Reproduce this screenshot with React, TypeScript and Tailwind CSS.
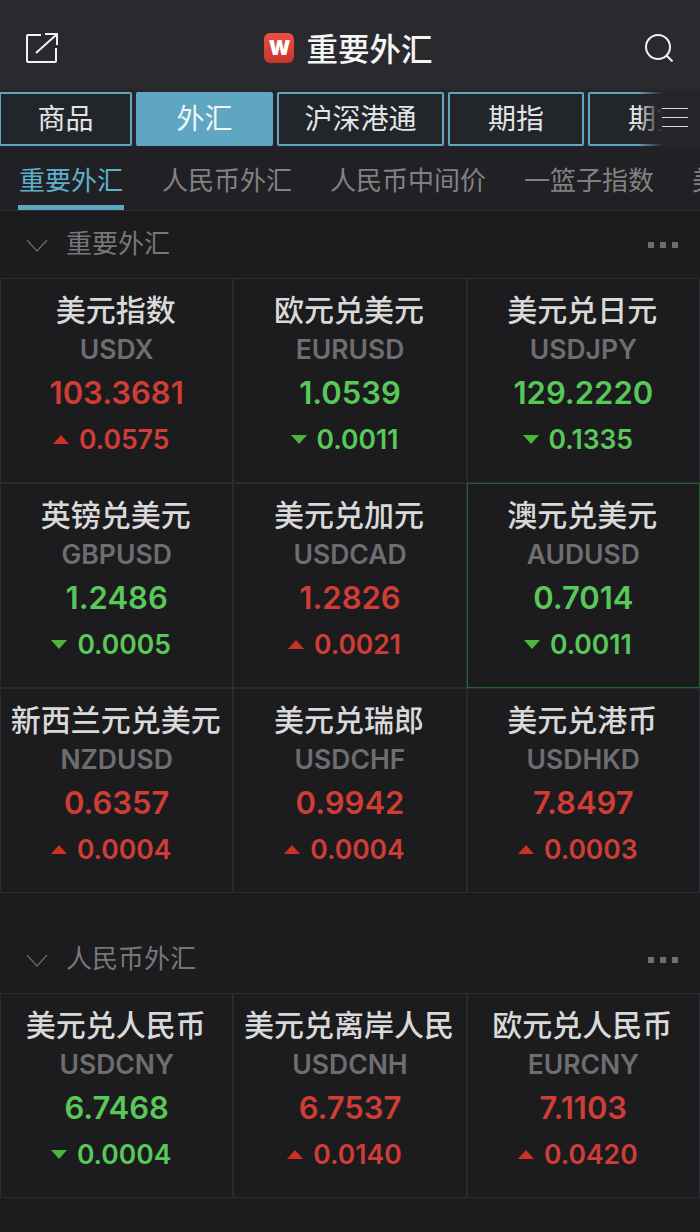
interface Quote {
  name: string;
  code: string;
  price: string;
  change: string;
  up: boolean;
  active?: boolean;
}

const majorQuotes: Quote[] = [
  { name: '美元指数', code: 'USDX', price: '103.3681', change: '0.0575', up: true },
  { name: '欧元兑美元', code: 'EURUSD', price: '1.0539', change: '0.0011', up: false },
  { name: '美元兑日元', code: 'USDJPY', price: '129.2220', change: '0.1335', up: false },
  { name: '英镑兑美元', code: 'GBPUSD', price: '1.2486', change: '0.0005', up: false },
  { name: '美元兑加元', code: 'USDCAD', price: '1.2826', change: '0.0021', up: true },
  { name: '澳元兑美元', code: 'AUDUSD', price: '0.7014', change: '0.0011', up: false, active: true },
  { name: '新西兰元兑美元', code: 'NZDUSD', price: '0.6357', change: '0.0004', up: true },
  { name: '美元兑瑞郎', code: 'USDCHF', price: '0.9942', change: '0.0004', up: true },
  { name: '美元兑港币', code: 'USDHKD', price: '7.8497', change: '0.0003', up: true }
];

const rmbQuotes: Quote[] = [
  { name: '美元兑人民币', code: 'USDCNY', price: '6.7468', change: '0.0004', up: false },
  { name: '美元兑离岸人民', code: 'USDCNH', price: '6.7537', change: '0.0140', up: true },
  { name: '欧元兑人民币', code: 'EURCNY', price: '7.1103', change: '0.0420', up: true }
];

const topTabs = [
  { label: '商品', width: 'w-[133px]' },
  { label: '外汇', width: 'w-[137px]', active: true },
  { label: '沪深港通', width: 'w-[167px]' },
  { label: '期指', width: 'w-[136px]' },
  { label: '期货', width: 'w-[136px]' }
];

const subTabs = ['人民币外汇', '人民币中间价', '一篮子指数', '美股'];

const QuoteCell = ({ quote }: { quote: Quote }) => {
  const color = quote.up ? 'text-[#cf3d35]' : 'text-[#58c858]';
  return (
    <div
      className={`h-[205px] flex flex-col items-center pt-[13px] border ${
        quote.active ? 'border-[#22662c]' : 'border-[#2a2a2f]'
      }`}
    >
      <div className="text-[30px] leading-[36px] pr-[2px] font-medium text-[#d9d9d9] whitespace-nowrap">{quote.name}</div>
      <div className="text-[26.5px] leading-[34px] mt-[4px] font-semibold text-[#6e6e70]">{quote.code}</div>
      <div className={`text-[31px] leading-[42px] mt-[6px] font-semibold ${color}`}>{quote.price}</div>
      <div className={`flex items-center gap-[10px] pr-[11px] mt-[7px] text-[26.5px] leading-[36px] font-semibold ${color}`}>
        {quote.up ? (
          <span className="w-0 h-0 border-x-[8px] border-x-transparent border-b-[9px] border-b-[#cc3224]" />
        ) : (
          <span className="w-0 h-0 border-x-[8px] border-x-transparent border-t-[9px] border-t-[#4cb53a]" />
        )}
        {quote.change}
      </div>
    </div>
  );
};

const SectionHeader = ({ title }: { title: string }) => (
  <div className="h-[67px] flex items-center pl-[26px] pr-[22px]">
    <svg width="22" height="14" viewBox="0 0 22 14" fill="none" stroke="#69696c" strokeWidth="1.3" className="mt-[2px]">
      <path d="M1 1l10 11L21 1" />
    </svg>
    <span className="ml-[18px] -mt-[2px] text-[26px] text-[#77777a]">{title}</span>
    <div className="ml-auto flex gap-[6px]">
      <span className="w-[6px] h-[6px] bg-[#6e6e70]" />
      <span className="w-[6px] h-[6px] bg-[#6e6e70]" />
      <span className="w-[6px] h-[6px] bg-[#6e6e70]" />
    </div>
  </div>
);

export default function App() {
  return (
    <div
      className="w-[700px] h-[1232px] overflow-hidden bg-[#1c1c1f]"
      style={{ fontFamily: 'Inter, "Noto Sans CJK SC", sans-serif' }}
    >
      <header className="h-[90px] bg-[#2a2a2e] flex items-center pl-[26px] pr-[27px] pt-[6px] relative">
        <svg width="32" height="30" viewBox="0 0 32 30" fill="none" stroke="#f2f2f2" strokeWidth="2">
          <path d="M15 2H2a1 1 0 0 0-1 1v25a1 1 0 0 0 1 1h27a1 1 0 0 0 1-1V15" />
          <path d="M10 20 30 2M19 1h12v11" />
        </svg>
        <div className="flex-1 flex justify-center items-center gap-[12px] pr-[6px]">
          <span className="w-[30px] h-[30px] rounded-[6px] bg-gradient-to-b from-[#ee4f44] to-[#c9342a] flex items-center justify-center text-white text-[20px] font-black leading-none">
            W
          </span>
          <span className="mt-[3px] text-[31.5px] font-medium text-[#f5f5f5]">重要外汇</span>
        </div>
        <svg width="28" height="28" viewBox="0 0 28 28" fill="none" stroke="#f2f2f2" strokeWidth="2">
          <circle cx="13" cy="13" r="12" />
          <path d="M21.5 21.5 27.5 27.5" />
        </svg>
      </header>

      <nav className="h-[57px] bg-[#26262a] flex items-start gap-[4px] pt-[2px] -ml-[1px] relative overflow-hidden">
        {topTabs.map((tab) => (
          <div
            key={tab.label}
            className={`${tab.width} h-[54px] shrink-0 flex items-center justify-center rounded-[2px] border-2 border-[#5fa6c2] text-[28px] ${
              tab.active ? 'bg-[#5fa6c2] text-[#eef6f9]' : 'bg-[#22252a] text-[#e4e4e4]'
            }`}
          >
            {tab.label}
          </div>
        ))}
        <div className="absolute right-0 top-0 w-[62px] h-full bg-gradient-to-r from-transparent via-[#26262a] via-40% to-[#26262a] flex items-center justify-end pr-[12px]">
          <div className="w-[26px] flex flex-col gap-[8px] -mt-[2px]">
            <span className="h-px bg-[#d8d8d8]" />
            <span className="h-px bg-[#d8d8d8]" />
            <span className="h-px bg-[#d8d8d8]" />
          </div>
        </div>
      </nav>

      <div className="h-[64px] bg-[#212125] border-b border-[#2e2e32] flex items-start pl-[18px] gap-[38px] overflow-hidden whitespace-nowrap">
        <div className="h-[63px] border-b-[5px] border-[#5fa6c2] px-px pt-[16px] text-[26px] leading-[36px] text-[#5fb0cc]">
          重要外汇
        </div>
        {subTabs.map((tab) => (
          <div key={tab} className="pt-[16px] text-[26px] leading-[36px] text-[#818184]">
            {tab}
          </div>
        ))}
      </div>

      <SectionHeader title="重要外汇" />
      <div className="grid grid-cols-3">
        {majorQuotes.map((quote) => (
          <QuoteCell key={quote.code} quote={quote} />
        ))}
      </div>

      <div className="h-[33px]" />
      <SectionHeader title="人民币外汇" />
      <div className="grid grid-cols-3">
        {rmbQuotes.map((quote) => (
          <QuoteCell key={quote.code} quote={quote} />
        ))}
      </div>
    </div>
  );
}
